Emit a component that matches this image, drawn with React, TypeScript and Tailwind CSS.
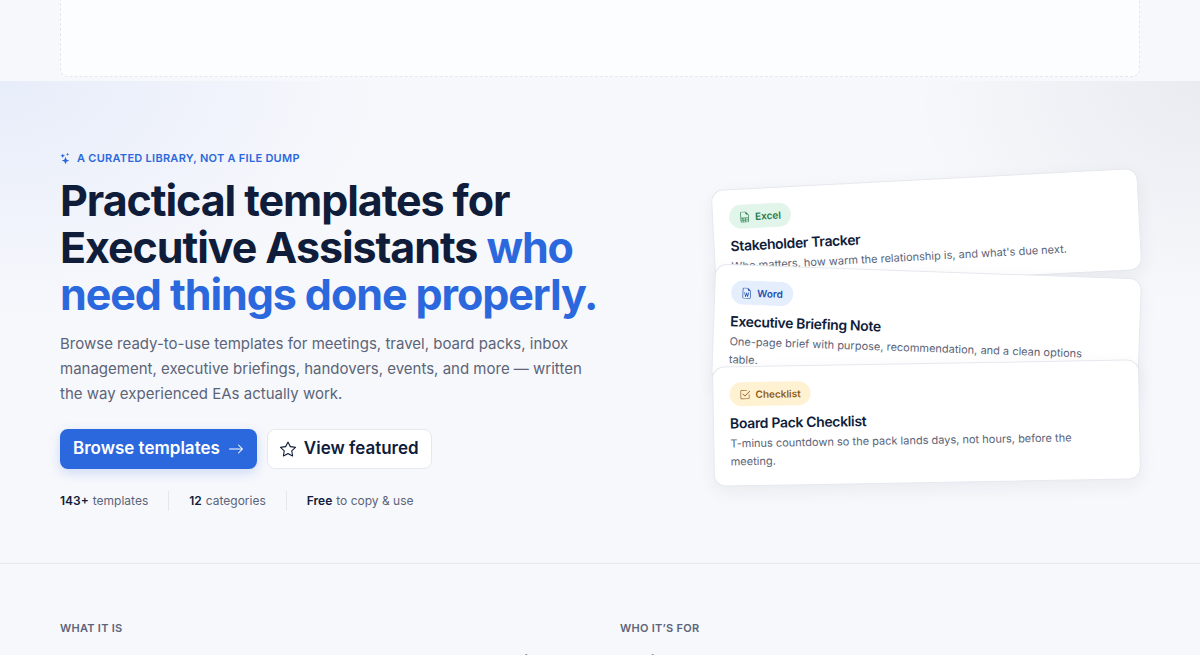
import { clsx } from 'clsx';
import type { IconType } from 'react-icons';
import {
  BsArrowRight,
  BsCheck2Square,
  BsFileEarmarkSpreadsheet,
  BsFileEarmarkWord,
  BsStar,
  BsStars,
} from 'react-icons/bs';

type Template = {
  kind: string;
  title: string;
  description: string;
  icon: IconType;
  badge: string;
  card: string;
};

const templates: Template[] = [
  {
    kind: 'Excel',
    title: 'Stakeholder Tracker',
    description: "Who matters, how warm the relationship is, and what's due next.",
    icon: BsFileEarmarkSpreadsheet,
    badge: 'bg-[#e2f5ea] text-[#23794a]',
    card: '-rotate-3',
  },
  {
    kind: 'Word',
    title: 'Executive Briefing Note',
    description: 'One-page brief with purpose, recommendation, and a clean options table.',
    icon: BsFileEarmarkWord,
    badge: 'bg-[#e5eefd] text-[#2450b0]',
    card: '-mt-2.5 rotate-2',
  },
  {
    kind: 'Checklist',
    title: 'Board Pack Checklist',
    description: 'T-minus countdown so the pack lands days, not hours, before the meeting.',
    icon: BsCheck2Square,
    badge: 'bg-[#fff2d3] text-[#8f5a14]',
    card: '-mt-7 -rotate-1',
  },
];

const stats = [
  { value: '143+', label: 'templates' },
  { value: '12', label: 'categories' },
  { value: 'Free', label: 'to copy & use' },
];

const intro = [
  { label: 'What it is', title: 'A curated set of EA templates for busy offices' },
  { label: 'Who it’s for', title: 'Built for EAs' },
];

function TemplateCard({ template }: { template: Template }) {
  const Icon = template.icon;
  return (
    <article
      className={clsx(
        'rounded-xl border border-[#e6e8ee] bg-white px-4 py-[15px] shadow-[0_6px_18px_rgba(15,29,58,0.06)]',
        template.card,
      )}
    >
      <span
        className={clsx(
          'flex h-6 w-fit items-center gap-[5px] rounded-full px-2.5 text-[10px] font-semibold',
          template.badge,
        )}
      >
        <Icon className="size-[11px]" />
        {template.kind}
      </span>
      <h3 className="mt-2 text-sm leading-[18px] font-semibold tracking-tight">{template.title}</h3>
      <p className="mt-0.5 max-w-[372px] text-[11px] leading-[18px] text-[#5b6478]">{template.description}</p>
    </article>
  );
}

export default function App() {
  return (
    <div className="h-screen overflow-hidden bg-[#f7f8fc] font-[Inter,sans-serif] text-[#0f1d3a]">
      {/* Empty slot above the hero */}
      <div className="px-15 pb-1">
        <div className="h-[77px] rounded-b-lg border border-t-0 border-dashed border-[#e4e7ee] bg-[#fcfdff]" />
      </div>

      {/* Hero */}
      <section className="border-b border-[#e4e7ee] bg-[radial-gradient(ellipse_480px_380px_at_100%_0%,rgba(15,29,58,0.06),transparent_60%),radial-gradient(ellipse_640px_400px_at_0%_0%,rgba(43,104,221,0.08),transparent_60%)] px-15 pt-[65px] pb-13">
        <div className="grid grid-cols-[1.4fr_1fr] items-center gap-14">
          <div>
            <p className="flex items-center gap-1.5 text-[11px] leading-6 font-semibold tracking-wide text-[#2b68dd] uppercase">
              <BsStars className="size-[11px]" />
              A curated library, not a file dump
            </p>
            <h1 className="mt-[7px] max-w-[560px] text-[43px] leading-[47px] font-bold tracking-tight">
              Practical templates for Executive Assistants{' '}
              <span className="text-[#2b68dd]">who need things done properly.</span>
            </h1>
            <p className="mt-[13px] max-w-[540px] text-[15px] leading-[25px] text-[#5b6478]">
              Browse ready-to-use templates for meetings, travel, board packs, inbox management, executive briefings,
              handovers, events, and more — written the way experienced EAs actually work.
            </p>
            <div className="mt-[23px] flex gap-2.5">
              <button className="flex h-10 items-center gap-2 rounded-lg bg-[#2b68dd] px-[13px] text-[17px] font-semibold text-white shadow-[0_4px_12px_rgba(43,104,221,0.2)]">
                Browse templates
                <BsArrowRight className="size-4" />
              </button>
              <button className="flex h-10 items-center gap-2 rounded-lg border border-[#e6e8ee] bg-white px-3 text-[17px] font-semibold">
                <BsStar className="size-4" />
                View featured
              </button>
            </div>
            <ul className="mt-[22px] flex text-xs leading-5">
              {stats.map((stat) => (
                <li key={stat.value} className="mr-5 flex gap-1 border-r border-[#e4e7ee] pr-5 last:border-0">
                  <strong className="font-semibold">{stat.value}</strong>
                  <span className="text-[#5b6478]">{stat.label}</span>
                </li>
              ))}
            </ul>
          </div>

          {/* Stacked previews */}
          <div className="pt-1">
            {templates.map((template) => (
              <TemplateCard key={template.kind} template={template} />
            ))}
          </div>
        </div>
      </section>

      <section className="grid grid-cols-2 gap-10 px-15 pt-14">
        {intro.map((item) => (
          <div key={item.label}>
            <p className="text-[11px] leading-4 font-semibold tracking-wide text-[#5b6478] uppercase">{item.label}</p>
            <h2 className="mt-[13px] text-2xl leading-8 font-bold tracking-tight whitespace-nowrap">{item.title}</h2>
          </div>
        ))}
      </section>
    </div>
  );
}
